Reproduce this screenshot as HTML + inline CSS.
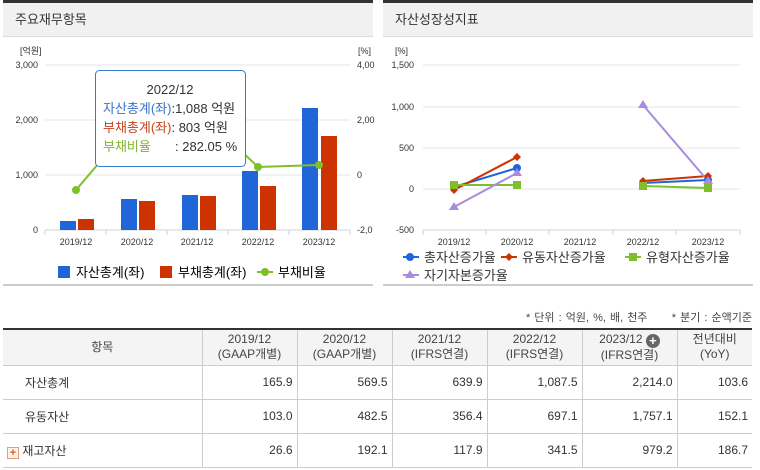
<!DOCTYPE html>
<html><head><meta charset="utf-8"><style>
*{margin:0;padding:0;box-sizing:border-box}
body{width:760px;height:470px;background:#fff;font-family:"Liberation Sans","Noto Sans CJK KR",sans-serif;position:relative;overflow:hidden;color:#333}
.panel{position:absolute;top:0;height:286px;border-top:3px solid #333;border-bottom:2px solid #ccc}
.hd{height:34px;background:#f1f1f1;border-bottom:1px solid #ddd;font-size:13px;line-height:34px;padding-left:12px;color:#333}
svg text{font-family:"Liberation Sans","Noto Sans CJK KR",sans-serif}
table{position:absolute;left:3px;top:328px;width:749px;border-collapse:collapse;font-size:12px;border-top:2px solid #333}
td,th{border-bottom:1px solid #ccc;border-left:1px solid #ccc;font-weight:normal}
th{background:#f4f4f4;height:36px;line-height:15px;color:#444;text-align:center}
td{height:34px;text-align:right;padding-right:4px}
tr>*:first-child{border-left:none}
td.l{text-align:left;padding-left:22px}
</style></head><body>
<div class="panel" style="left:3px;width:370px"><div class="hd">주요재무항목</div></div>
<div class="panel" style="left:383px;width:370px"><div class="hd">자산성장성지표</div></div>

<svg style="position:absolute;left:0;top:0" width="760" height="290">
<g font-size="9" fill="#333">
<text x="20" y="54">[억원]</text><text x="358" y="54">[%]</text>
<text x="38" y="68" text-anchor="end">3,000</text><text x="38" y="123" text-anchor="end">2,000</text><text x="38" y="178" text-anchor="end">1,000</text><text x="38" y="233" text-anchor="end">0</text>
<text x="357" y="68">4,00</text><text x="357" y="123">2,00</text><text x="357" y="178">0</text><text x="357" y="233">-2,0</text>
</g>
<g stroke="#e6e6e6"><line x1="45" y1="65" x2="350" y2="65"/><line x1="45" y1="120" x2="350" y2="120"/><line x1="45" y1="175" x2="350" y2="175"/></g>
<line x1="45" y1="230" x2="350" y2="230" stroke="#ccd6e0"/>
<g stroke="#ccd6e0"><line x1="45" y1="230" x2="45" y2="235"/><line x1="106" y1="230" x2="106" y2="235"/><line x1="167" y1="230" x2="167" y2="235"/><line x1="228" y1="230" x2="228" y2="235"/><line x1="289" y1="230" x2="289" y2="235"/><line x1="350" y1="230" x2="350" y2="235"/></g>
<g fill="#2166d9">
<rect x="60" y="221" width="16" height="9"/><rect x="121" y="199" width="16" height="31"/><rect x="182" y="195" width="16" height="35"/><rect x="242" y="171" width="16" height="59"/><rect x="302" y="108" width="16" height="122"/></g>
<g fill="#cc3300">
<rect x="78" y="219" width="16" height="11"/><rect x="139" y="201" width="16" height="29"/><rect x="200" y="196" width="16" height="34"/><rect x="260" y="186" width="16" height="44"/><rect x="321" y="136" width="16" height="94"/></g>
<polyline points="76,190 110,150 240,150 258,167 319,165" fill="none" stroke="#7fbf2a" stroke-width="2"/>
<g fill="#7fbf2a"><circle cx="76" cy="190" r="4"/><circle cx="258" cy="167" r="4"/><circle cx="319" cy="165" r="4"/></g>
<g font-size="9" fill="#333" text-anchor="middle"><text x="76" y="245">2019/12</text><text x="137" y="245">2020/12</text><text x="197" y="245">2021/12</text><text x="258" y="245">2022/12</text><text x="319" y="245">2023/12</text></g>
<rect x="95.5" y="70.5" width="150" height="96" rx="4" fill="#fff" stroke="#3a78c8"/>
<g font-size="13"><text x="170" y="94" text-anchor="middle" fill="#333">2022/12</text>
<text x="103" y="113" fill="#3a6fc7">자산총계(좌)<tspan fill="#333">:1,088 억원</tspan></text>
<text x="103" y="132" fill="#c8401a">부채총계(좌)<tspan fill="#333">:  803 억원</tspan></text>
<text x="103" y="151" fill="#7fb32a">부채비율<tspan fill="#333" x="175">:  282.05 %</tspan></text></g>
<rect x="58" y="266" width="12" height="12" fill="#2166d9"/><text x="76" y="277" font-size="13">자산총계(좌)</text>
<rect x="160" y="266" width="12" height="12" fill="#cc3300"/><text x="178" y="277" font-size="13">부채총계(좌)</text>
<line x1="257" y1="272" x2="273" y2="272" stroke="#7fbf2a" stroke-width="2"/><circle cx="265" cy="272" r="4" fill="#7fbf2a"/><text x="278" y="277" font-size="13">부채비율</text>

<g font-size="9" fill="#333" text-anchor="end">
<text x="408" y="54">[%]</text><text x="414" y="68">1,500</text><text x="414" y="110">1,000</text><text x="414" y="151">500</text><text x="414" y="192">0</text><text x="414" y="233">-500</text></g>
<g stroke="#e6e6e6"><line x1="423" y1="65" x2="740" y2="65"/><line x1="423" y1="107" x2="740" y2="107"/><line x1="423" y1="148" x2="740" y2="148"/><line x1="423" y1="189" x2="740" y2="189"/></g>
<line x1="423" y1="230" x2="740" y2="230" stroke="#ccd6e0"/>
<g stroke="#ccd6e0"><line x1="423" y1="230" x2="423" y2="235"/><line x1="486" y1="230" x2="486" y2="235"/><line x1="549" y1="230" x2="549" y2="235"/><line x1="613" y1="230" x2="613" y2="235"/><line x1="676" y1="230" x2="676" y2="235"/><line x1="740" y1="230" x2="740" y2="235"/></g>
<g font-size="9" fill="#333" text-anchor="middle"><text x="454" y="245">2019/12</text><text x="517" y="245">2020/12</text><text x="580" y="245">2021/12</text><text x="643" y="245">2022/12</text><text x="708" y="245">2023/12</text></g>
<g fill="none" stroke-width="2">
<polyline points="454,187 517,168" stroke="#2166d9"/><polyline points="643,183 708,180" stroke="#2166d9"/>
<polyline points="454,190 517,157" stroke="#cc3300"/><polyline points="643,181 708,176" stroke="#cc3300"/>
<polyline points="454,185 517,185" stroke="#7fbf2a"/><polyline points="643,186 708,188" stroke="#7fbf2a"/>
<polyline points="454,207 517,173" stroke="#a98be0"/><polyline points="643,105 708,181" stroke="#a98be0"/></g>
<g fill="#2166d9"><circle cx="517" cy="168" r="4"/><circle cx="708" cy="180" r="4"/></g>
<g fill="#cc3300"><path d="M454 186l4 4-4 4-4-4z"/><path d="M517 153l4 4-4 4-4-4z"/><path d="M643 177l4 4-4 4-4-4z"/><path d="M708 172l4 4-4 4-4-4z"/></g>
<g fill="#7fbf2a"><rect x="450" y="181" width="8" height="8"/><rect x="513" y="181" width="8" height="8"/><rect x="639" y="182" width="8" height="8"/><rect x="704" y="184" width="8" height="8"/></g>
<g fill="#a98be0"><path d="M454 202l5 8h-10z"/><path d="M517 168l5 8h-10z"/><path d="M643 100l5 8h-10z"/><path d="M708 176l5 8h-10z"/></g>
<g font-size="13" fill="#333">
<line x1="403" y1="257" x2="419" y2="257" stroke="#2166d9" stroke-width="2"/><circle cx="410" cy="257" r="4" fill="#2166d9"/><text x="424" y="262">총자산증가율</text>
<line x1="501" y1="257" x2="517" y2="257" stroke="#cc3300" stroke-width="2"/><path d="M509 253l4 4-4 4-4-4z" fill="#cc3300"/><text x="522" y="262">유동자산증가율</text>
<line x1="625" y1="257" x2="641" y2="257" stroke="#7fbf2a" stroke-width="2"/><rect x="629" y="253" width="8" height="8" fill="#7fbf2a"/><text x="646" y="262">유형자산증가율</text>
<line x1="403" y1="275" x2="419" y2="275" stroke="#a98be0" stroke-width="2"/><path d="M410 270l5 8h-10z" fill="#a98be0"/><text x="424" y="280">자기자본증가율</text></g>
</svg>

<div style="position:absolute;right:8px;top:309px;font-size:11px;color:#444;word-spacing:1px">* 단위 : 억원, %, 배, 천주 &nbsp;&nbsp;&nbsp;&nbsp; * 분기 : 순액기준</div>
<table>
<tr><th style="width:199px">항목</th><th style="width:95px">2019/12<br>(GAAP개별)</th><th style="width:95px">2020/12<br>(GAAP개별)</th><th style="width:95px">2021/12<br>(IFRS연결)</th><th style="width:95px">2022/12<br>(IFRS연결)</th><th style="width:95px">2023/12 <span style="display:inline-block;width:14px;height:14px;border-radius:7px;background:#666;color:#fff;font-size:13px;line-height:14px;font-weight:bold;vertical-align:-2px">+</span><br>(IFRS연결)</th><th>전년대비<br>(YoY)</th></tr>
<tr><td class="l">자산총계</td><td>165.9</td><td>569.5</td><td>639.9</td><td>1,087.5</td><td>2,214.0</td><td>103.6</td></tr>
<tr><td class="l">유동자산</td><td>103.0</td><td>482.5</td><td>356.4</td><td>697.1</td><td>1,757.1</td><td>152.1</td></tr>
<tr><td class="l" style="padding-left:4px"><span style="display:inline-block;width:12px;height:12px;border:1px solid #e0a080;background:#fff3ea;color:#e05a1a;font-size:11px;line-height:10px;text-align:center;font-weight:bold;vertical-align:-1px">+</span> 재고자산</td><td>26.6</td><td>192.1</td><td>117.9</td><td>341.5</td><td>979.2</td><td>186.7</td></tr>
</table>
</body></html>
